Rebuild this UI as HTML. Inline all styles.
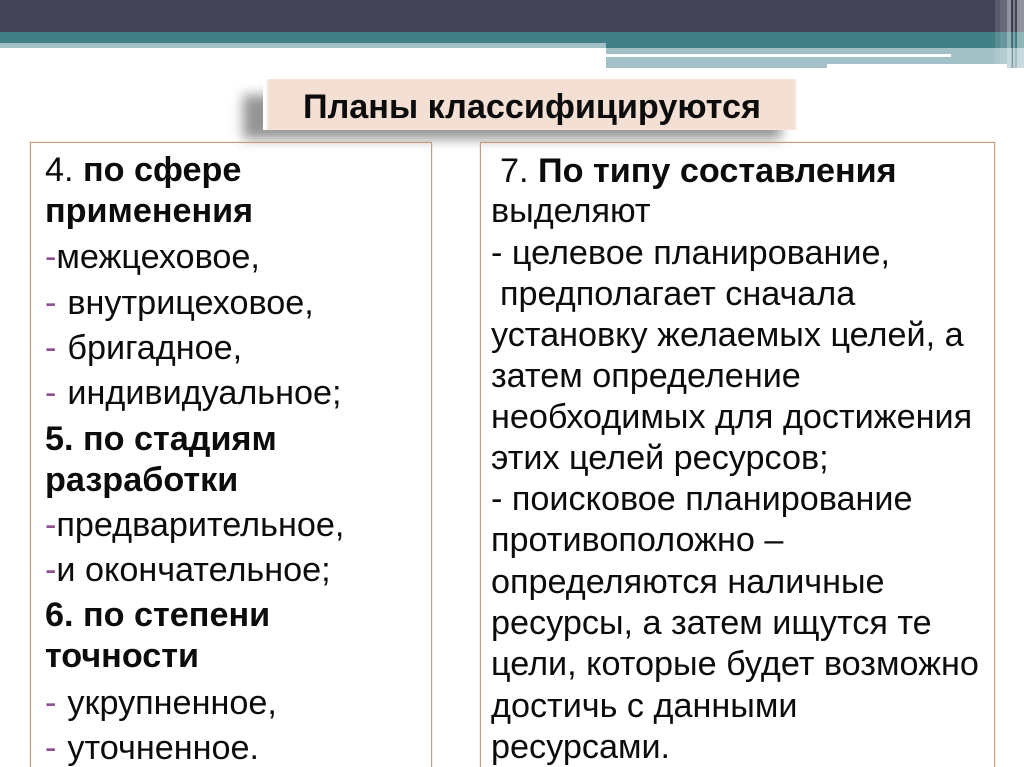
<!DOCTYPE html>
<html lang="ru"><head><meta charset="utf-8"><style>
html,body{margin:0;padding:0;background:#fff}
#p{position:relative;width:1024px;height:767px;overflow:hidden;background:#fff;font-family:"Liberation Sans",sans-serif}
#p div{position:absolute}
svg{position:absolute;left:0;top:0}
text{font-family:"Liberation Sans",sans-serif;font-size:34.2px;fill:#0c0c0c}
.b{font-weight:bold}
.d{fill:#8d4f8f}
</style></head><body><div id="p">
<div style="left:0;top:0;width:1024px;height:32px;background:#444458"></div>
<div style="left:0;top:32px;width:1024px;height:11px;background:#437f87"></div>
<div style="left:0;top:43px;width:606px;height:5px;background:#a2c0c6"></div>
<div style="left:606px;top:43px;width:418px;height:5px;background:#437f87"></div>
<div style="left:606px;top:48px;width:418px;height:20px;background:#a2c0c6"></div>
<div style="left:606px;top:54px;width:345px;height:3px;background:#fff"></div>
<div style="left:827px;top:64px;width:180px;height:4px;background:#fff"></div>
<div style="left:995px;top:0;width:5px;height:64px;background:rgba(255,255,255,.12)"></div>
<div style="left:1000px;top:0;width:7px;height:64px;background:rgba(255,255,255,.2)"></div>
<div style="left:1007px;top:0;width:4px;height:68px;background:rgba(255,255,255,.42)"></div>
<div style="left:1013px;top:0;width:2px;height:68px;background:rgba(255,255,255,.3)"></div>
<div style="left:1017px;top:0;width:7px;height:68px;background:rgba(255,255,255,.42)"></div>
<div style="left:1012px;top:0;width:1px;height:68px;background:rgba(0,0,30,.2)"></div>

<div style="left:243px;top:95px;width:538px;height:44px;background:#7a7a7a;filter:blur(6px);opacity:.8"></div>

<div style="left:30px;top:142px;width:400px;height:640px;border:1px solid #c99a7c;box-shadow:0 0 1px rgba(170,120,90,.6)"></div>
<div style="left:480px;top:142px;width:513px;height:640px;border:1px solid #c99a7c;box-shadow:0 0 1px rgba(170,120,90,.6)"></div>

<div style="left:263px;top:79px;width:537px;height:51px;background:#f3dfd3;box-shadow:inset 5px 0 2px -1px #fff,inset -5px 0 2px -1px #fff"></div>

<svg width="1024" height="767" viewBox="0 0 1024 767">
<text x="303" y="118" class="b">Планы классифицируются</text>

<text x="45" y="181">4. <tspan class="b">по сфере</tspan></text>
<text x="45" y="222" class="b">применения</text>
<text x="45" y="268"><tspan class="d">-</tspan>межцеховое,</text>
<text x="45" y="314"><tspan class="d">-</tspan><tspan dx="1.5"> внутрицеховое,</tspan></text>
<text x="45" y="359"><tspan class="d">-</tspan><tspan dx="1.5"> бригадное,</tspan></text>
<text x="45" y="404"><tspan class="d">-</tspan><tspan dx="1.5"> индивидуальное;</tspan></text>
<text x="45" y="450" class="b">5. по стадиям</text>
<text x="45" y="491" class="b">разработки</text>
<text x="45" y="536"><tspan class="d">-</tspan>предварительное,</text>
<text x="45" y="581"><tspan class="d">-</tspan>и окончательное;</text>
<text x="45" y="626" class="b">6. по степени</text>
<text x="45" y="667" class="b">точности</text>
<text x="45" y="714"><tspan class="d">-</tspan><tspan dx="1.5"> укрупненное,</tspan></text>
<text x="45" y="759"><tspan class="d">-</tspan><tspan dx="1.5"> уточненное.</tspan></text>

<text x="500" y="182">7. <tspan class="b">По типу составления</tspan></text>
<text x="491" y="222">выделяют</text>
<text x="491" y="264">- целевое планирование,</text>
<text x="500" y="305">предполагает сначала</text>
<text x="491" y="346">установку желаемых целей, а</text>
<text x="491" y="387">затем определение</text>
<text x="491" y="428">необходимых для достижения</text>
<text x="491" y="469">этих целей ресурсов;</text>
<text x="491" y="510">- поисковое планирование</text>
<text x="491" y="551">противоположно –</text>
<text x="491" y="593">определяются наличные</text>
<text x="491" y="634">ресурсы, а затем ищутся те</text>
<text x="491" y="675">цели, которые будет возможно</text>
<text x="491" y="717">достичь с данными</text>
<text x="491" y="758">ресурсами.</text>
</svg>
</div></body></html>
